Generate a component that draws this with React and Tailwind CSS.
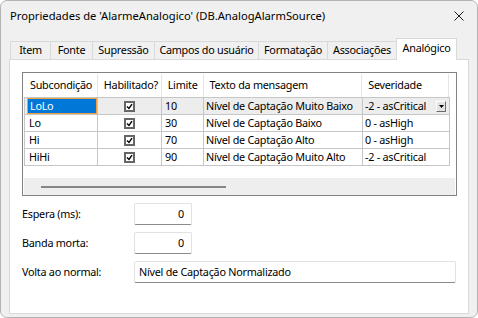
const rows = [
  { sub: "LoLo", lim: "10", txt: "Nível de Captação Muito Baixo", sev: "-2 - asCritical" },
  { sub: "Lo", lim: "30", txt: "Nível de Captação Baixo", sev: "0 - asHigh" },
  { sub: "Hi", lim: "70", txt: "Nível de Captação Alto", sev: "0 - asHigh" },
  { sub: "HiHi", lim: "90", txt: "Nível de Captação Muito Alto", sev: "-2 - asCritical" },
];

const tabs = [
  { label: "Item", w: "w-[40px]" },
  { label: "Fonte", w: "w-[42px]" },
  { label: "Supressão", w: "w-[62px]" },
  { label: "Campos do usuário", w: "w-[104px]" },
  { label: "Formatação", w: "w-[69px]" },
  { label: "Associações", w: "w-[69px]" },
];

const Check = () => (
  <div className="w-[11px] h-[11px] border-2 border-[#666666] bg-white flex items-center justify-center">
    <svg width="7" height="7" viewBox="0 0 7 7">
      <path d="M1 3.5 L3 5.5 L6 1.2" fill="none" stroke="#000" strokeWidth="1.4" />
    </svg>
  </div>
);

const Field = ({ label, value, wide }) => (
  <div className="flex items-center h-[22px]">
    <div className="w-[112px]">{label}</div>
    <div
      className={
        "h-[22px] bg-white border border-[#e2e2e2] border-b-[#8b8b8b] rounded-[2px] flex items-center " +
        (wide ? "w-[322px] pl-[4px]" : "w-[58px] justify-end pr-[7px]")
      }
    >
      {value}
    </div>
  </div>
);

export default function App() {
  return (
    <div
      className="w-[478px] h-[318px] bg-white text-black text-[10.8px] tracking-[-0.25px] leading-none whitespace-nowrap"
      style={{ fontFamily: '"Noto Sans", sans-serif' }}
    >
      <div className="w-full h-full border border-[#b3b3b3] rounded-[7px] bg-[#f0f0f0] flex flex-col overflow-hidden">
        {/* title bar */}
        <div className="h-[29px] flex items-center justify-between pl-[9px] pr-[13px] text-[11.2px] tracking-normal">
          <span>Propriedades de 'AlarmeAnalogico' (DB.AnalogAlarmSource)</span>
          <svg width="10" height="10" viewBox="0 0 10 10">
            <path d="M0.5 0.5 L9.5 9.5 M9.5 0.5 L0.5 9.5" stroke="#1a1a1a" strokeWidth="1" />
          </svg>
        </div>

        {/* tabs */}
        <div className="mt-[8px] h-[22px] flex pl-[9px] relative z-10">
          {tabs.map((t) => (
            <div
              key={t.label}
              className={
                "mt-[3px] h-[18px] border-t border-l border-[#d9d9d9] bg-[#f0f0f0] flex items-center justify-center " + t.w
              }
            >
              {t.label}
            </div>
          ))}
          <div className="w-[61px] h-[22px] bg-white border border-b-0 border-[#d9d9d9] flex items-start justify-center pt-[4px]">
            Analógico
          </div>
        </div>

        {/* page */}
        <div className="-mt-[1px] mx-[8px] mb-[3px] flex-1 bg-white border border-[#d9d9d9] pl-[12px] pt-[12px]">
          {/* grid */}
          <div className="w-[435px] h-[124px] border border-[#828282] pt-[1px] px-[1px] flex flex-col">
            <div className="h-[23px] flex">
              {[
                ["Subcondição", "w-[73px]"],
                ["Habilitado?", "w-[64px] border-l"],
                ["Limite", "w-[42px] border-l"],
                ["Texto da mensagem", "w-[159px] border-l"],
                ["Severidade", "w-[87px] border-l"],
                ["", "w-[1px] border-l"],
              ].map(([h, c], i) => (
                <div key={i} className={"h-full flex items-center pl-[6px] border-[#e5e5e5] " + c}>
                  {h}
                </div>
              ))}
            </div>
            <div className="w-[426px] border-b border-[#c6c6c6]">
              {rows.map((r, i) => (
                <div
                  key={r.sub}
                  className={"h-[17px] flex border-t border-[#c6c6c6] " + (i === 0 ? "bg-[#ededed]" : "")}
                >
                  <div className="w-[73px] border-l border-[#c6c6c6] flex">
                    {i === 0 ? (
                      <div className="flex-1 ml-[2px] bg-[#0078d7] border border-[#f0a040] text-white flex items-center pl-[2px]">
                        {r.sub}
                      </div>
                    ) : (
                      <div className="flex-1 flex items-center pl-[4px]">{r.sub}</div>
                    )}
                  </div>
                  <div className="w-[64px] border-l border-[#c6c6c6] flex items-center justify-center">
                    <Check />
                  </div>
                  <div className="w-[42px] border-l border-[#c6c6c6] flex items-center pl-[3px]">{r.lim}</div>
                  <div className="w-[159px] border-l border-[#c6c6c6] flex items-center pl-[2px]">{r.txt}</div>
                  <div className="w-[87px] border-l border-[#c6c6c6] flex items-center justify-between pl-[2px] pr-[3px]">
                    <span>{r.sev}</span>
                    {i === 0 && (
                      <div className="w-[10px] h-[11px] bg-[#e3e3e3] border border-t-white border-l-white border-r-[#6a6a6a] border-b-[#6a6a6a] flex items-center justify-center">
                        <svg width="5" height="3" viewBox="0 0 5 3">
                          <path d="M0 0 H5 L2.5 3 Z" fill="#000" />
                        </svg>
                      </div>
                    )}
                  </div>
                  <div className="w-[1px] border-l border-[#c6c6c6]" />
                </div>
              ))}
            </div>
            <div className="flex-1" />
            <div className="h-[17px] bg-[#eeeeee] flex items-center pl-[17px]">
              <div className="w-[185px] h-[2px] bg-[#868686]" />
            </div>
          </div>

          {/* fields */}
          <div className="mt-[7px] flex flex-col gap-[7px]">
            <Field label="Espera (ms):" value="0" />
            <Field label="Banda morta:" value="0" />
            <Field label="Volta ao normal:" value="Nível de Captação Normalizado" wide />
          </div>
        </div>
      </div>
    </div>
  );
}
